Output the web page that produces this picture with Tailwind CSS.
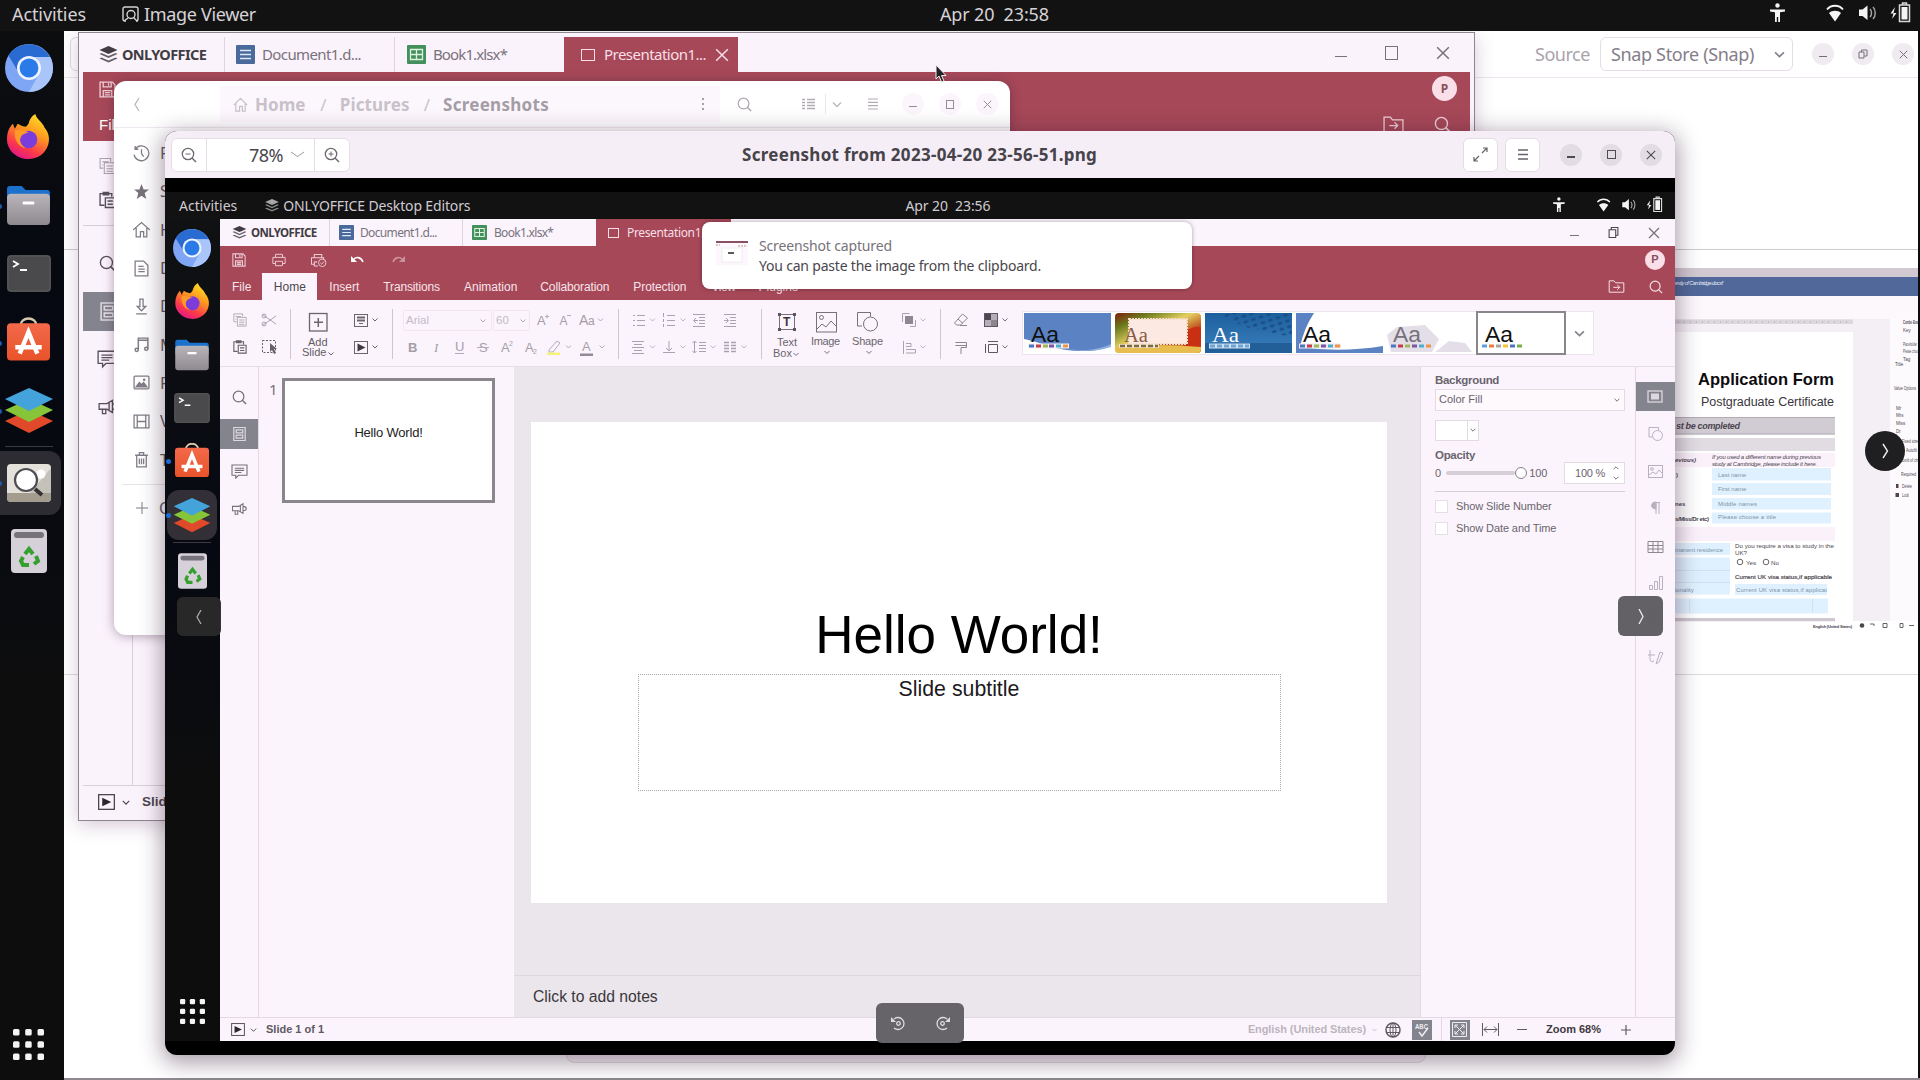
<!DOCTYPE html>
<html lang="en">
<head>
<meta charset="utf-8">
<title>Image Viewer</title>
<script src="https://cdn.jsdelivr.net/npm/@tailwindcss/browser@4"></script>
</head>
<body class="relative h-[1080px] w-[1920px] overflow-hidden bg-[#0c0c0d] font-['Noto_Sans',sans-serif] whitespace-nowrap text-[#4a464c]">
<!-- Icon sprite -->
<svg class="absolute size-0">
  <defs>
    <linearGradient id="ffg" x1=".8" y1="0" x2=".3" y2="1"><stop offset="0" stop-color="#ffe226"/><stop offset=".4" stop-color="#ff9a1f"/><stop offset=".75" stop-color="#fb3a4a"/><stop offset="1" stop-color="#e3158a"/></linearGradient>
    <linearGradient id="flg" x1="0" y1="0" x2="0" y2="1"><stop offset="0" stop-color="#b9b3ba"/><stop offset="1" stop-color="#8f8a90"/></linearGradient>
    <linearGradient id="swg" x1="0" y1="0" x2="0" y2="1"><stop offset="0" stop-color="#f2694a"/><stop offset="1" stop-color="#e8532a"/></linearGradient>
    <linearGradient id="blg" x1="0" y1="0" x2="0" y2="1"><stop offset="0" stop-color="#1d5f9e"/><stop offset="1" stop-color="#3a80bd"/></linearGradient>
    <linearGradient id="autumn" x1="0" y1="0" x2="1" y2="1"><stop offset="0" stop-color="#7d1d0c"/><stop offset=".2" stop-color="#6c7a1d"/><stop offset=".45" stop-color="#e3d060"/><stop offset=".7" stop-color="#b83a14"/><stop offset="1" stop-color="#f0b640"/></linearGradient>
    <pattern id="dots" width="8" height="6" patternUnits="userSpaceOnUse" patternTransform="rotate(-18)"><ellipse cx="4" cy="3" rx="2.6" ry="1.6" fill="#17487f" opacity=".8"/></pattern>
  </defs>
  <symbol id="chromium" viewBox="0 0 48 48"><circle cx="24" cy="24" r="24" fill="#7ea6f4"/><path d="M3.400 11.600A24 24 0 0 1 45 13H24L14 29Z" fill="#2a6bd2"/><path d="M24 13H45.300A24 24 0 0 1 24 48L34 30Z" fill="#a9c5fa"/><circle cx="24" cy="24" r="12" fill="#eef3ff"/><circle cx="24" cy="24" r="9.400" fill="#2a7ae8"/></symbol>
  <symbol id="firefox" viewBox="0 0 44 46"><path d="M29 0c1 5 7 8 9.500 14C43 19 44 26 42 32c-3 9-11 14-20 14C10 46 0 37 0 26c0-7 2-12 6-16l2 5 3-5c2 1 4 3 8 3 2-1 2-2 3-3 1-4 3-8 7-10Z" fill="url(#ffg)"/><circle cx="22" cy="26" r="9" fill="#7a3ddb"/><path d="M8 17c5-2 10 0 14 2-4 1-7 2-8 5-2 4 1 9 6 11-8-1-13-8-12-18Z" fill="#ff9a28"/></symbol>
  <symbol id="files" viewBox="0 0 46 42"><path d="M1 4q0-3 3-3h12l4 4h22q3 0 3 3v12H1Z" fill="#1a72cc"/><rect x="1" y="9" width="44" height="32" rx="4" fill="url(#flg)"/><rect x="17" y="17" width="12" height="3" rx="1" fill="#fff"/></symbol>
  <symbol id="terminal" viewBox="0 0 44 37"><rect width="44" height="37" rx="4" fill="#4a4a4c"/><rect x="1" y="1" width="42" height="35" rx="3" fill="none" stroke="#5a5a5c"/><path d="m6 6 5 3-5 3M13 15h7" fill="none" stroke="#fff" stroke-width="1.800"/></symbol>
  <symbol id="software" viewBox="0 0 46 44"><path d="M15 8a8 7 0 0 1 16 0" fill="none" stroke="#d8c8b0" stroke-width="2.400"/><rect x="1" y="6" width="44" height="38" rx="4" fill="url(#swg)"/><path d="M14 37 23 15l9 22M9.500 30.500h27" fill="none" stroke="#fff" stroke-width="4.500"/></symbol>
  <symbol id="oo" viewBox="0 0 48 46"><path d="m24 22 24 11-24 12L0 33Z" fill="#e1492a"/><path d="m24 11 24 11-24 12L0 22Z" fill="#86c53a"/><path d="m24 0 24 11-24 12L0 11Z" fill="#45a3dc"/></symbol>
  <symbol id="viewer" viewBox="0 0 44 38"><rect width="44" height="38" rx="4" fill="#e4e0da"/><path d="M22 30 44 4v26Z" fill="#c4c2b8"/><path d="M0 29h44v5q0 4-4 4H4q-4 0-4-4Z" fill="#a59c90"/><circle cx="34" cy="10" r="4.500" fill="#fff"/><circle cx="19" cy="16" r="11" fill="#fff" stroke="#4e4e52" stroke-width="2.200"/><path d="m28 25 7 6" stroke="#333" stroke-width="4"/></symbol>
  <symbol id="trash" viewBox="0 0 36 44"><rect width="36" height="44" rx="4" fill="#d6d1d8"/><rect x="3" y="3" width="30" height="6" rx="3" fill="#77737a"/><g fill="none" stroke="#35a02f" stroke-width="4"><path d="m14 25 4-5 4 5M25 27l2 5-4 3M18 36h-6l-2-4 2-4"/></g></symbol>
  <symbol id="grid" viewBox="0 0 31 31"><g fill="#f4f4f4"><rect width="6.500" height="6.500" rx="1.500"/><rect x="12.200" width="6.500" height="6.500" rx="1.500"/><rect x="24.500" width="6.500" height="6.500" rx="1.500"/><rect y="12.200" width="6.500" height="6.500" rx="1.500"/><rect x="12.200" y="12.200" width="6.500" height="6.500" rx="1.500"/><rect x="24.500" y="12.200" width="6.500" height="6.500" rx="1.500"/><rect y="24.500" width="6.500" height="6.500" rx="1.500"/><rect x="12.200" y="24.500" width="6.500" height="6.500" rx="1.500"/><rect x="24.500" y="24.500" width="6.500" height="6.500" rx="1.500"/></g></symbol>
  <symbol id="stack" viewBox="0 0 18 17"><path d="m9 0 9 4-9 4-9-4Z" fill="currentColor"/><path d="m0 8 2-1 7 3 7-3 2 1-9 4ZM0 12.500l2-1 7 3 7-3 2 1-9 4Z" fill="currentColor" opacity=".8"/></symbol>
  <symbol id="doc" viewBox="0 0 19 19"><rect width="19" height="19" rx="1" fill="#4a6a9c"/><path d="M4 5.500h11M4 9.500h11M4 13.500h11" stroke="#dfe8f5" stroke-width="1.400"/></symbol>
  <symbol id="sheet" viewBox="0 0 19 19"><rect width="19" height="19" rx="1" fill="#43905c"/><path d="M3.500 4.500h12v10h-12ZM3.500 9.500h12M9.500 4.500v10" fill="none" stroke="#dff2e2" stroke-width="1.300"/></symbol>
  <symbol id="search" viewBox="0 0 16 16"><circle cx="7" cy="7" r="5.700" fill="none" stroke="currentColor" stroke-width="1.300"/><path d="m11 11 4 4" stroke="currentColor" stroke-width="1.500"/></symbol>
  <symbol id="x" viewBox="0 0 12 12"><path d="m1 1 10 10M11 1 1 11" stroke="currentColor" stroke-width="1.300"/></symbol>
  <symbol id="chev" viewBox="0 0 10 6"><path d="m1 1 4 4 4-4" fill="none" stroke="currentColor" stroke-width="1.500"/></symbol>
  <symbol id="save" viewBox="0 0 16 16"><path d="M1 1h11.500L15 3.500V15H1ZM4 1v4.500h7.500V1M9 2v2.500M4 15V9h8v6M5.500 11h5M5.500 13h5" fill="none" stroke="currentColor" stroke-width="1.200"/></symbol>
  <symbol id="printer" viewBox="0 0 16 16"><path d="M4 5V1.500h8V5M4 12H1V5h14v7h-3M4 9.500h8v5H4Z" fill="none" stroke="currentColor" stroke-width="1.100"/></symbol>
  <symbol id="folder" viewBox="0 0 20 16"><path d="M1 1h6l2 2.500h10V15H1ZM6 9h8M11 6l3 3-3 3" fill="none" stroke="currentColor" stroke-width="1.200"/></symbol>
  <symbol id="copy" viewBox="0 0 16 16"><path d="M11 4V1H1v9h3M5 5h10v10H5ZM3 4h6M3 7h1M7 8h6M7 10.500h6M7 13h6" fill="none" stroke="currentColor"/></symbol>
  <symbol id="paste" viewBox="0 0 16 16"><path d="M12 5V2H1v11h4M4 1h5v2H4ZM6 6h9v9H6ZM8 9h5M8 12h5" fill="none" stroke="currentColor" stroke-width="1.300"/></symbol>
  <symbol id="slides" viewBox="0 0 16 18"><path d="M1 1h14v16H1ZM4 4h8v3.500H4ZM4 10.500h8V14H4Z" fill="none" stroke="currentColor" stroke-width="1.500"/></symbol>
  <symbol id="comment" viewBox="0 0 18 16"><path d="M1 1h16v11H8l-3 3v-3H1ZM4 4.500h10M4 6.800h10M4 9h7" fill="none" stroke="currentColor" stroke-width="1.200"/></symbol>
  <symbol id="horn" viewBox="0 0 18 16"><path d="M1 5h7l5-3v11l-5-3H1ZM4 10v4h3v-4M13 5c5 0 5 5 0 5M10 4v7" fill="none" stroke="currentColor" stroke-width="1.200"/></symbol>
  <symbol id="play" viewBox="0 0 16 15"><rect x=".6" y=".6" width="14.800" height="13.800" fill="none" stroke="currentColor" stroke-width="1.200"/><path d="m4 3.500 8.500 4-8.500 4Z" fill="#2b272d"/></symbol>
  <symbol id="status" viewBox="1754 0 170 36"><g fill="#f4f4f4"><circle cx="1776.500" cy="6.500" r="2.200"/><path d="M1769 10.500h15v2l-5 .7V23h-1.800v-5h-1.400v5h-1.800v-9.800l-5-.7Z"/><path d="M1834 22.500 1828 14c3-3 9-3 12 0Z"/><path d="M1858 10.500h3.500l5-4v14.500l-5-4H1858ZM1894 8l-4.500 6.500h3L1891 20l4.500-6h-3Z"/></g><path d="M1826 10.500c4-5 12-5 16 0" fill="none" stroke="#f4f4f4" stroke-width="1.800"/><path d="M1869 10c2 2 2 6 0 8M1872 8c3 3 3 9 0 12" fill="none" stroke="#a9a9a9" stroke-width="1.400"/><path d="M1898.500 6h10v16.500h-10ZM1901.500 6V4h4v2" fill="none" stroke="#d9d9d9" stroke-width="1.500"/><rect x="1900.500" y="8" width="6" height="12.500" fill="#f4f4f4"/></symbol>
</svg>

<!-- Software store window -->
<section class="absolute left-[64px] top-[31px] flex h-[1047px] w-[1854px] flex-col bg-white">
  <header class="flex h-[47px] shrink-0 items-center border-b border-[#efe4ef]">
    <div class="ml-[6px] h-[34px] w-[60px] rounded-md border border-[#e4dae5]"></div>
    <span class="ml-auto text-[18px] leading-none tracking-[-0.46px] text-[#aaa3ac]">Source</span>
    <div class="ml-[10px] flex h-[34px] w-[193px] items-center rounded-md border border-[#e6dbe7] pl-[10px] text-[#857e8a]"><span class="text-[18px] leading-none tracking-[-0.35px]">Snap Store (Snap)</span><svg class="ml-[20px] h-[7px] w-[11px]"><use href="#chev"/></svg></div>
    <div class="mr-[4px] ml-[19px] flex gap-[18px] text-[#726d76]">
      <i class="flex size-[22px] items-end justify-center rounded-full bg-[#f0eaf1] pb-[8px]"><b class="h-px w-[8px] bg-current"></b></i>
      <i class="flex size-[22px] items-center justify-center rounded-full bg-[#f0eaf1]"><svg class="size-[10px]" viewBox="0 0 10 10"><path d="M1 3h5v6H1ZM3.500 3V1H9v6H6.500" fill="none" stroke="currentColor"/></svg></i>
      <i class="flex size-[22px] items-center justify-center rounded-full bg-[#f0eaf1]"><svg class="size-[9px]"><use href="#x"/></svg></i>
    </div>
  </header>
  <div class="h-[172px] shrink-0 border-b border-[#cfcad0]"></div>
  <div class="flex h-[425px] shrink-0 justify-end border-b border-[#dfdae0] pt-[18px]">
    <svg class="h-[364px] w-[243px] font-['Liberation_Sans',sans-serif]" viewBox="1675 268 243 364" fill="#4b454e">
      <rect x="1675" y="268" width="243" height="10" fill="#d2c9d2"/><rect x="1675" y="277" width="243" height="19" fill="#50699a"/>
      <text x="1674" y="284.500" font-size="5.500" font-style="italic" fill="#e8edf8" textLength="49">ersity of Cambridge.docxf</text>
      <rect x="1675" y="296" width="243" height="23" fill="#fcf8fc"/>
      <rect x="1675" y="319" width="215" height="302" fill="#f4eff5"/><rect x="1675" y="319.500" width="178" height="4.500" fill="#dcd6dd"/><path d="M1678 322h174" stroke="#aaa3ac" stroke-dasharray="1 5"/>
      <rect x="1675" y="332" width="178" height="289" fill="#fff"/><rect x="1890" y="319" width="28" height="302" fill="#fdfafd"/>
      <g fill="#0d0b0e"><text x="1698" y="385" font-size="16.500" font-weight="700" textLength="136">Application Form</text><text x="1701" y="406" font-size="12.500" fill="#3a353c" textLength="133">Postgraduate Certificate</text></g>
      <rect x="1675" y="417" width="160" height="17.500" fill="#d1ccd3"/><path d="M1675 417.500h160M1675 434h160" stroke="#b3acb5"/>
      <text x="1676" y="429" font-size="9" font-weight="700" font-style="italic" textLength="64">st be completed</text>
      <rect x="1675" y="438" width="160" height="13" fill="#e1dce2"/><rect x="1675" y="453" width="160" height="14" fill="#faf1fa"/>
      <g font-size="6" font-weight="700"><text x="1675" y="462" font-style="italic">evious)</text><text x="1676" y="477">)</text><text x="1675" y="506">nes</text><text x="1675" y="521" textLength="34">s/Miss/Dr etc)</text></g>
      <g font-size="6" font-style="italic"><text x="1712" y="459" textLength="109">If you used a different name during previous</text><text x="1712" y="465.500" textLength="105">study at Cambridge, please include it here.</text></g>
      <g fill="#dff1fe"><rect x="1712" y="468" width="119" height="12.500"/><rect x="1712" y="483" width="119" height="12"/><rect x="1712" y="498" width="119" height="11.500"/><rect x="1712" y="512.500" width="119" height="11"/><rect x="1675" y="543" width="55" height="12"/><rect x="1675" y="557.500" width="55" height="37"/><rect x="1735" y="584" width="92" height="11"/><rect x="1675" y="598.500" width="153" height="15"/></g>
      <path d="M1675 570.500h55M1675 582.500h55M1689.500 599v14M1812.500 599v14" stroke="#cfe2f2"/>
      <g font-size="6" fill="#7a93a8"><text x="1718" y="476.500">Last name</text><text x="1718" y="491">First name</text><text x="1718" y="506" textLength="39">Middle names</text><text x="1718" y="519" textLength="58">Please choose a title</text><text x="1675" y="551.500" textLength="48">manent residence</text><text x="1675" y="591.500">ionality</text><text x="1736" y="591.500" textLength="91">Current UK visa status,if applicat</text></g>
      <rect x="1675" y="527" width="160" height="14" fill="#fbf1fb"/>
      <g font-size="6.200"><text x="1735" y="548" textLength="99">Do you require a visa to study in the</text><text x="1735" y="555">UK?</text><circle cx="1740" cy="562" r="2.800" fill="none" stroke="#666"/><text x="1746" y="564.500">Yes</text><circle cx="1766" cy="562" r="2.800" fill="none" stroke="#666"/><text x="1771" y="564.500">No</text><text x="1735" y="578.500" stroke="#4b454e" stroke-width=".2" textLength="97">Current UK visa status,if applicable</text></g>
      <rect x="1675" y="618" width="160" height="3.500" fill="#cfc7d0"/>
      <rect x="1675" y="621.500" width="243" height="10" fill="#fff"/><text x="1813" y="627.500" font-size="4" font-weight="700" textLength="39">English (United States)</text>
      <circle cx="1862" cy="625.500" r="2.300"/><path d="M1870 624h4v2M1883 623.500h4v4h-4ZM1900 623.500h3v4h-3ZM1909 625.500h5" fill="none" stroke="#666"/>
      <g font-size="4.500"><text x="1903" y="324" font-weight="700" textLength="15" lengthAdjust="spacingAndGlyphs">Combo Box</text><text x="1903" y="331.500">Key</text><text x="1903" y="346" textLength="14" lengthAdjust="spacingAndGlyphs">Placeholder</text><text x="1903" y="352.500" textLength="15" lengthAdjust="spacingAndGlyphs">Please choo</text><text x="1903" y="360.500">Tag</text><text x="1895" y="366">Title</text><text x="1894" y="390" textLength="22" lengthAdjust="spacingAndGlyphs">Value Options</text><text x="1896" y="409.500">Mr</text><text x="1896" y="417">Mrs</text><text x="1896" y="425">Miss</text><text x="1896" y="432.500">Dr</text><text x="1902" y="443" textLength="16" lengthAdjust="spacingAndGlyphs">Fixed size</text><text x="1906" y="452" textLength="11" lengthAdjust="spacingAndGlyphs">Autofit</text><text x="1900" y="462" textLength="18" lengthAdjust="spacingAndGlyphs">Comb of ch</text><text x="1901" y="476" textLength="15" lengthAdjust="spacingAndGlyphs">Required</text><text x="1902" y="487.500" textLength="10" lengthAdjust="spacingAndGlyphs">Delete</text><text x="1902" y="497" textLength="7" lengthAdjust="spacingAndGlyphs">Lock</text></g><path d="M1896 484h2.500v4h-2.500ZM1895.500 493h3.500v4h-3.500Z"/>
    </svg>
  </div>
</section>
<div class="absolute left-[64px] top-[1078px] h-[2px] w-[1856px] bg-[#8d898e]"></div>
<button class="absolute left-[1865px] top-[431px] flex size-[40px] items-center justify-center rounded-full bg-[#1f1e20]"><svg class="h-[16px] w-[7px]" viewBox="0 0 7 16"><path d="m1 1 4.500 7L1 15" fill="none" stroke="#eee" stroke-width="1.400"/></svg></button>
<div class="absolute left-[566px] top-[1040px] h-[23px] w-[860px] rounded-lg border border-[#e0dae1] bg-[#f6f1f6]"></div>

<!-- Office window behind -->
<section class="absolute left-[78px] top-[32px] flex h-[789px] w-[1397px] flex-col border border-[#8c868e] bg-[#fbf3fc] shadow-[0_4px_18px_rgba(90,40,90,0.25)]">
  <div class="flex h-[39px] items-end text-[15px] leading-none text-[#78727b]">
    <div class="flex h-[35px] w-[146px] items-center border-r border-[#ddd4de] pl-[20px] text-[#403c42]"><svg class="h-[17px] w-[19px]"><use href="#stack"/></svg><b class="ml-[4px] text-[14.500px] tracking-[-0.6px]">ONLYOFFICE</b></div>
    <div class="flex h-[35px] w-[170px] items-center border-r border-[#ddd4de] pl-[11px]"><svg class="size-[19px]"><use href="#doc"/></svg><span class="ml-[7px] tracking-[-0.61px]">Document1.d...</span></div>
    <div class="flex h-[35px] w-[169px] items-center pl-[12px]"><svg class="size-[19px]"><use href="#sheet"/></svg><span class="ml-[7px] tracking-[-0.88px]">Book1.xlsx*</span></div>
    <div class="flex h-[35px] w-[174px] items-center bg-[#a64858] pl-[17px] text-[#f6dfe6]"><i class="h-[12px] w-[14px] border border-current"></i><span class="ml-[9px] tracking-[-0.53px]">Presentation1...</span><svg class="ml-[9px] size-[14px]"><use href="#x"/></svg></div>
    <div class="mr-[24px] mb-[12px] ml-auto flex items-end gap-[38px] text-[#77717a]"><b class="mb-[3px] h-px w-[12px] bg-current"></b><i class="h-[14px] w-[13px] border border-current"></i><svg class="size-[14px]"><use href="#x"/></svg></div>
  </div>
  <div class="mx-[4px] flex h-[69px] shrink-0 justify-between bg-[#a64858] text-[#efd0d8]">
    <div class="flex flex-col pt-[9px] pl-[16px]"><svg class="size-[17px]"><use href="#save"/></svg><span class="mt-[19px] text-[15px] leading-none text-white font-['Liberation_Sans',sans-serif]">File</span></div>
    <div class="flex flex-col items-end pt-[4px] pr-[13px]"><b class="flex h-[25px] w-[25px] items-center justify-center rounded-full bg-[#fadfe8] text-[12px] text-[#84525f]">P</b><div class="mt-[15px] mr-[6px] flex gap-[30px]"><svg class="h-[17px] w-[21px]"><use href="#folder"/></svg><svg class="size-[17px]"><use href="#search"/></svg></div></div>
  </div>
  <div class="mx-[4px] flex w-[32px] flex-1 flex-col text-[#57525a]">
    <svg class="mt-[16px] ml-[16px] h-[18px] w-[17px] text-[#aaa3ac]"><use href="#copy"/></svg>
    <svg class="mt-[16px] ml-[16px] h-[18px] w-[17px]"><use href="#paste"/></svg>
    <div class="mt-[16px] h-px w-[60px] bg-[#d6ced7]"></div>
    <svg class="mt-[29px] ml-[16px] size-[17px]"><use href="#search"/></svg>
    <div class="mt-[20px] h-[39px] w-[60px] bg-[#84848f] pt-[10px] pl-[17px] text-[#ddd8e0]"><svg class="h-[19px] w-[17px]"><use href="#slides"/></svg></div>
    <svg class="mt-[18px] ml-[14px] h-[20px] w-[20px]"><use href="#comment"/></svg>
    <svg class="mt-[29px] ml-[15px] h-[18px] w-[20px]"><use href="#horn"/></svg>
    <div class="mt-auto h-[160px] w-[50px] border-r border-[#d8d0d9]"></div>
  </div>
  <footer class="mx-[4px] flex h-[35px] items-center border-t border-[#d8d0d9] pb-[2px] pl-[15px]"><svg class="h-[16px] w-[17px]"><use href="#play"/></svg><svg class="ml-[7px] h-[5px] w-[8px]"><use href="#chev"/></svg><b class="ml-[12px] text-[13.500px] font-['Liberation_Sans',sans-serif]">Slide 1 of 1</b></footer>
</section>

<!-- Files window -->
<section class="absolute left-[114px] top-[81px] flex h-[554px] w-[896px] flex-col overflow-hidden rounded-xl bg-white shadow-[0_1px_12px_rgba(60,30,60,0.4)]">
  <header class="flex h-[47px] shrink-0 items-center border-b border-[#efe8f0] text-[17px] leading-none font-bold text-[#c9c1ca]">
    <svg class="ml-[20px] h-[15px] w-[6px]" viewBox="0 0 6 15"><path d="M5 1 1 7.500 5 14" fill="none" stroke="#b9aebb" stroke-width="1.200"/></svg>
    <div class="ml-[80px] flex h-[36px] w-[500px] items-center bg-[#fcf7fc] pl-[13px]">
      <svg class="h-[15px] w-[15px]" viewBox="0 0 16 16"><path d="M1 8.500 8 1.500l7 7M3 7v8h4v-5h3v5h3V7" fill="none" stroke="currentColor" stroke-width="1.300"/></svg>
      <span class="ml-[7px]">Home</span><span class="ml-[15px] font-normal">/</span><span class="ml-[13px] tracking-[0.15px]">Pictures</span><span class="ml-[14px] font-normal">/</span><span class="ml-[13px] tracking-[0.28px] text-[#a49da6]">Screenshots</span>
      <svg class="mr-[15px] ml-auto h-[12px] w-[3px]" viewBox="0 0 3 12" fill="#a69fa8"><path d="M0 0h2v2H0ZM0 5h2v2H0ZM0 10h2v2H0Z"/></svg>
    </div>
    <svg class="ml-[17px] size-[15px] text-[#aea6b0]"><use href="#search"/></svg>
    <svg class="ml-[50px] h-[12px] w-[13px]" viewBox="0 0 13 12"><path d="M0 1.500h3M0 4.500h3M0 7.500h3M0 10.500h3M5 1.500h8M5 4.500h8M5 7.500h8M5 10.500h8" stroke="#b2aab4" stroke-width="1.300"/></svg>
    <i class="ml-[10px] h-[20px] w-px bg-[#ebe4ec]"></i><svg class="ml-[6px] h-[7px] w-[10px] text-[#c0b9c2]"><use href="#chev"/></svg>
    <svg class="ml-[26px] h-[12px] w-[10px]" viewBox="0 0 10 12"><path d="M0 1h10M0 4.300h10M0 7.600h10M0 11h10" stroke="#b2aab4" stroke-width="1.200"/></svg>
    <div class="ml-[24px] flex gap-[15px] text-[#948d97]">
      <i class="flex size-[22px] items-end justify-center rounded-full bg-[#fcf5fc] pb-[8px]"><b class="h-px w-[8px] bg-current"></b></i>
      <i class="flex size-[22px] items-center justify-center rounded-full bg-[#fcf5fc]"><b class="h-[9px] w-[8px] border border-current"></b></i>
      <i class="flex size-[22px] items-center justify-center rounded-full bg-[#fcf5fc]"><svg class="size-[9px]"><use href="#x"/></svg></i>
    </div>
  </header>
  <nav class="flex w-[180px] flex-col pt-[6px] text-[16px] text-[#625d66]">
    <div class="flex h-[38.300px] items-center pl-[19px]"><svg class="size-[17px]" viewBox="0 0 16 16" fill="none" stroke="#827c86" stroke-width="1.200"><path d="M2 4a7 7 0 1 1-1 5M2 1v3h3M8 4v4l2 3"/></svg><span class="ml-[10px]">Recent</span></div>
    <div class="flex h-[38.300px] items-center pl-[19px]"><svg class="size-[17px]" viewBox="0 0 16 16" fill="#77717a"><path d="m8 1 2 5h5l-4 3.500 1.500 5.500L8 12l-4.500 3L5 9.500 1 6h5Z"/></svg><span class="ml-[10px]">Starred</span></div>
    <div class="flex h-[38.300px] items-center pl-[19px]"><svg class="size-[17px]" viewBox="0 0 16 16" fill="none" stroke="#827c86" stroke-width="1.200"><path d="m0 8.500 8-7 8 7M3 6.500V15h4v-5h3v5h3V6.500"/></svg><span class="ml-[10px]">Home</span></div>
    <div class="flex h-[38.300px] items-center pl-[19px]"><svg class="size-[17px]" viewBox="0 0 16 16" fill="none" stroke="#827c86" stroke-width="1.200"><path d="M2 1h8l4 4v10H2ZM5 6h5M5 8.500h6M5 11h6"/></svg><span class="ml-[10px]">Documents</span></div>
    <div class="flex h-[38.300px] items-center pl-[19px]"><svg class="size-[17px]" viewBox="0 0 16 16" fill="none" stroke="#827c86" stroke-width="1.200"><path d="M6.500 1h3v7H12l-4 4-4-4h2.500ZM3 15h10"/></svg><span class="ml-[10px]">Downloads</span></div>
    <div class="flex h-[38.300px] items-center pl-[19px]"><svg class="size-[17px]" viewBox="0 0 16 16" fill="none" stroke="#827c86" stroke-width="1.400"><path d="M5 13V2h9v10M5 4h9"/><circle cx="3.500" cy="13" r="1.500"/><circle cx="12.500" cy="12" r="1.500"/></svg><span class="ml-[10px]">Music</span></div>
    <div class="flex h-[38.300px] items-center pl-[19px]"><svg class="size-[17px]" viewBox="0 0 16 16" fill="none" stroke="#827c86" stroke-width="1.200"><rect x="1" y="2" width="14" height="12" rx="1"/><path d="m3 12 3-4 2 2 2-2 3 4Z" fill="#827c86"/><circle cx="10.500" cy="5.500" r=".6"/></svg><span class="ml-[10px]">Pictures</span></div>
    <div class="flex h-[38.300px] items-center pl-[19px]"><svg class="size-[17px]" viewBox="0 0 16 16" fill="none" stroke="#827c86" stroke-width="1.200"><path d="M1 2h14v12H1ZM4 2v12M12 2v12M4 8h8"/></svg><span class="ml-[10px]">Videos</span></div>
    <div class="flex h-[38.300px] items-center pl-[19px]"><svg class="size-[17px]" viewBox="0 0 16 16" fill="none" stroke="#827c86" stroke-width="1.200"><path d="M2 4h12M6 4V1.500h4V4M3.500 4v11h9V4M6 7v5.500M8 7v5.500M10 7v5.500"/></svg><span class="ml-[10px]">Trash</span></div>
    <div class="mt-[5px] ml-[8px] h-px bg-[#eae2eb]"></div>
    <div class="mt-[4px] flex h-[38px] items-center pl-[22px]"><svg class="size-[12px]" viewBox="0 0 12 12"><path d="M6 0v12M0 6h12" stroke="#827c86"/></svg><span class="ml-[11px]">Other</span></div>
  </nav>
</section>

<!-- Image viewer window -->
<section class="absolute left-[165px] top-[131px] flex h-[924px] w-[1510px] flex-col overflow-hidden rounded-xl bg-black shadow-[0_5px_22px_3px_rgba(50,25,50,0.42)]">
  <header class="flex h-[47px] shrink-0 items-center bg-[#f5eef6]">
    <div class="ml-[6px] flex h-[34px] w-[179px] items-center rounded-md border border-[#e5dce6] bg-white text-[#6d6770]">
      <div class="flex h-full w-[35px] items-center justify-center border-r border-[#e5dce6]"><svg class="size-[16px]"><use href="#search"/><path d="M4.500 7h5" stroke="currentColor"/></svg></div>
      <span class="ml-[42px] text-[18px] leading-none tracking-[-0.52px] text-[#4a464d]">78%</span><svg class="ml-[7px] h-[7px] w-[15px]" viewBox="0 0 15 7"><path d="m1 1 6.500 4.500L14 1" fill="none" stroke="#999"/></svg>
      <div class="ml-auto flex h-full w-[35px] items-center justify-center border-l border-[#e5dce6]"><svg class="size-[16px]"><use href="#search"/><path d="M4.500 7h5M7 4.500v5" stroke="currentColor"/></svg></div>
    </div>
    <h1 class="ml-[392px] text-[17px] leading-none font-bold tracking-[0.29px] text-[#47434a]">Screenshot from 2023-04-20 23-56-51.png</h1>
    <div class="ml-auto flex h-[34px] w-[35px] items-center justify-center rounded-md border border-[#e5dce6] bg-white"><svg class="size-[15px]" viewBox="0 0 15 15" fill="none" stroke="#67616a" stroke-width="1.200"><path d="M9 6l5-5M10 1h4v4M6 9l-5 5M1 10v4h4"/></svg></div>
    <div class="ml-[7px] flex h-[34px] w-[35px] items-center justify-center rounded-md border border-[#e5dce6] bg-white"><svg class="h-[11px] w-[10px]" viewBox="0 0 10 11"><path d="M0 1h10M0 5.500h10M0 10h10" stroke="#67616a" stroke-width="1.300"/></svg></div>
    <div class="mr-[13px] ml-[20px] flex gap-[18px] text-[#4f4a52]">
      <i class="flex size-[22px] items-end justify-center rounded-full bg-[#e2dce3] pb-[8px]"><b class="h-[1.500px] w-[8px] bg-current"></b></i>
      <i class="flex size-[22px] items-center justify-center rounded-full bg-[#e2dce3]"><b class="size-[9px] border border-current"></b></i>
      <i class="flex size-[22px] items-center justify-center rounded-full bg-[#e2dce3]"><svg class="size-[10px]"><use href="#x"/></svg></i>
    </div>
  </header>

  <div class="mt-[14px] flex h-[27px] shrink-0 items-center bg-[#131213] text-[14px] leading-none text-[#cfcbd0]">
    <span class="ml-[14px]">Activities</span>
    <svg class="ml-[28px] h-[13px] w-[14px] opacity-80"><use href="#stack"/></svg><span class="ml-[4px] tracking-[-0.14px]">ONLYOFFICE Desktop Editors</span>
    <span class="ml-[435px] tracking-[-0.08px] whitespace-pre">Apr 20  23:56</span>
    <svg class="mt-[4px] mr-px ml-auto h-[28px] w-[133px]"><use href="#status"/></svg>
  </div>

  <div class="flex h-[822px] shrink-0">
    <aside class="relative flex w-[55px] shrink-0 flex-col items-center bg-[#0b0b0c] bg-linear-to-b from-[#101112] via-[#070912] via-40% to-[#0d0d0d] to-70% pr-[1px]">
      <svg class="mt-[10px] size-[38px]"><use href="#chromium"/></svg>
      <svg class="mt-[16px] h-[36px] w-[35px]"><use href="#firefox"/></svg>
      <svg class="mt-[20px] h-[32px] w-[36px]"><use href="#files"/></svg>
      <svg class="mt-[22px] h-[30px] w-[36px]"><use href="#terminal"/></svg>
      <svg class="mt-[20px] h-[34px] w-[36px]"><use href="#software"/></svg>
      <div class="mt-[13px] flex size-[50px] items-center justify-center rounded-xl bg-[#323036]"><svg class="h-[35px] w-[38px]"><use href="#oo"/></svg></div>
      <div class="mt-[2px] h-px w-[38px] bg-[#3b3a40]"></div>
      <svg class="mt-[10px] h-[36px] w-[29px]"><use href="#trash"/></svg>
      <svg class="mt-auto mb-[17px] size-[25px]"><use href="#grid"/></svg>
      <i class="absolute left-[1px] top-[240px] size-[5px] rounded-full bg-[#1c6bd0]"></i>
      <i class="absolute left-[1px] top-[294px] size-[5px] rounded-full bg-[#1c6bd0]"></i>
    </aside>

    <div class="flex w-[1455px] flex-col bg-[#fbf4fc] font-['Liberation_Sans',sans-serif]">
      <div class="flex h-[27px] shrink-0 items-center font-['Noto_Sans',sans-serif] text-[12px] leading-none text-[#78727b]">
        <div class="flex h-full w-[110px] items-center border-r border-[#ddd4de] pl-[12px] text-[#403c42]"><svg class="h-[13px] w-[15px]"><use href="#stack"/></svg><b class="ml-[4px] text-[11.500px] tracking-[-0.6px]">ONLYOFFICE</b></div>
        <div class="flex h-full w-[133px] items-center border-r border-[#ddd4de] pl-[9px]"><svg class="size-[15px]"><use href="#doc"/></svg><span class="ml-[6px] tracking-[-0.65px]">Document1.d...</span></div>
        <div class="flex h-full w-[133px] items-center pl-[9px]"><svg class="size-[15px]"><use href="#sheet"/></svg><span class="ml-[7px] tracking-[-0.7px]">Book1.xlsx*</span></div>
        <div class="flex h-full w-[135px] items-center bg-[#a64858] pl-[12px] text-[#f6dfe6]"><i class="h-[10px] w-[11px] border border-current"></i><span class="ml-[8px] tracking-[-0.35px]">Presentation1...</span></div>
        <div class="mr-[15px] ml-auto flex items-center gap-[29px] text-[#77717a]"><b class="mt-[6px] h-px w-[9px] bg-current"></b><svg class="size-[11px] text-[#4b464d]" viewBox="0 0 10 10"><path d="M1 2.500h6V9.500H1ZM3 2.500V.5h6v7H7" fill="none" stroke="currentColor"/></svg><svg class="size-[12px]"><use href="#x"/></svg></div>
      </div>
      <div class="flex h-[27px] shrink-0 items-center bg-[#a64858] text-[#ecccd5]">
        <svg class="ml-[12px] size-[14px]"><use href="#save"/></svg><svg class="ml-[25px] h-[14px] w-[16px]"><use href="#printer"/></svg>
        <svg class="ml-[23px] h-[14px] w-[17px]" viewBox="0 0 17 15"><path d="M4 5V1.500h8V5M4 12H1V5h13v2M4 9.500h3M4 9.500V14h4" fill="none" stroke="currentColor" stroke-width="1.100"/><circle cx="12.500" cy="10.500" r="4" fill="none" stroke="currentColor"/><path d="m10.500 10.500 1.500 1.500 2.500-3" fill="none" stroke="currentColor"/></svg>
        <svg class="ml-[24px] h-[9px] w-[13px]" viewBox="0 0 13 9"><path d="M2 5c3-4 8-3 10 2" fill="none" stroke="#fff" stroke-width="1.600"/><path d="M0 1v6h6Z" fill="#fff"/></svg>
        <svg class="ml-[28px] h-[9px] w-[13px] opacity-40" viewBox="0 0 13 9"><path d="M11 5C8 1 3 2 1 7" fill="none" stroke="#fff" stroke-width="1.600"/><path d="M13 1v6H7Z" fill="#fff"/></svg>
        <b class="mr-[10px] ml-auto flex size-[20px] items-center justify-center rounded-full bg-[#fadfe8] text-[11px] text-[#84525f]">P</b>
      </div>
      <div class="flex h-[27px] shrink-0 items-center bg-[#a64858] text-[12px] leading-none text-[#f7e4ea]">
        <span class="ml-[12px]">File</span><div class="ml-[11px] flex h-full w-[55px] items-center justify-center bg-[#fbf4fc] text-[#4c474f]">Home</div>
        <span class="ml-[12px]">Insert</span><span class="ml-[24px] tracking-[-0.15px]">Transitions</span><span class="ml-[24px]">Animation</span><span class="ml-[23px] tracking-[-0.13px]">Collaboration</span><span class="ml-[24px] tracking-[-0.1px]">Protection</span><span class="ml-[25px] tracking-[-0.4px]">View</span><span class="ml-[23px]">Plugins</span>
        <svg class="ml-auto h-[13px] w-[17px]"><use href="#folder"/></svg><svg class="mr-[12px] ml-[24px] size-[14px]"><use href="#search"/></svg>
      </div>

      <!-- Home toolbar -->
      <div class="flex h-[67px] shrink-0 items-center border-b border-[#e6dee7] text-[#aaa3ad]">
        <svg class="h-[66px] w-[70px]" viewBox="220 300 70 66" fill="none" stroke="currentColor"><use href="#copy" x="233" y="313" width="14" height="14"/><path d="M263 315l13 9M263 325l13-9"/><circle cx="264" cy="316" r="2"/><circle cx="264" cy="324" r="2"/><g color="#67616a"><use href="#paste" x="233" y="340" width="14" height="14"/></g><rect x="262.500" y="340.500" width="13" height="12" stroke="#67616a" stroke-dasharray="2 1.500"/><path d="m270 343 7 6h-3l2 4-2 1-2-4-2 2Z" fill="#67616a" stroke="none"/></svg>
        <svg class="h-[66px] w-[102px]" viewBox="290 300 102 66" fill="none" stroke="#6b656e"><path d="M290.500 309v50" stroke="#cfc7d0"/><rect x="309.500" y="313.500" width="17.500" height="17.500" stroke-width="1.300"/><path d="M318.300 318v9M314 322.300h9" stroke-width="1.500"/><g fill="#625c65" stroke="none" font-size="11"><text x="308" y="346">Add</text><text x="302" y="356">Slide</text></g><path d="m328.500 352.500 2.500 2.500 2.500-2.500"/><rect x="354.500" y="314.500" width="13" height="12"/><path d="M357 317.500h8M357 320.500h8" stroke-width="1.800"/><path d="M359 323.500h4"/><path d="m372.500 318.500 2.500 2.500 2.500-2.500M372.500 345.500l2.500 2.500 2.500-2.500"/><rect x="354.500" y="341.500" width="13" height="12"/><path d="m357.500 343.500 8 4-8 4Z" fill="#3f3a42" stroke="none"/></svg>
        <svg class="h-[66px] w-[226px]" viewBox="392 300 226 66" fill="none" stroke="#b3acb6"><path d="M392.500 309v50" stroke="#cfc7d0"/><rect x="403.500" y="310.500" width="88" height="20" rx="1" stroke="#f0e7f1"/><rect x="493.500" y="310.500" width="36" height="20" rx="1" stroke="#f0e7f1"/><path d="m480.500 319.500 2.500 2.500 2.500-2.500M520.500 319.500l2.500 2.500 2.500-2.500M598 318.500l2.500 2.500 2.500-2.500M566 345.500l2.500 2.500 2.500-2.500M599.500 345.500l2.500 2.500 2.500-2.500"/><g fill="#a59ea8" stroke="none" font-size="13"><text x="406" y="324" font-size="11.500" fill="#c3bbc5">Arial</text><text x="496" y="324" font-size="11.500" fill="#c3bbc5">60</text><text x="537" y="325">A</text><text x="559.500" y="324.500" font-size="12">A</text><text x="579" y="325" font-size="14">A</text><text x="588" y="325" font-size="12">a</text><text x="408" y="352" font-weight="700">B</text><text x="434" y="352" font-style="italic" font-family="Liberation Serif">I</text><text x="455" y="351">U</text><text x="479" y="352">S</text><text x="501" y="352">A</text><text x="509" y="346" font-size="7">2</text><text x="525" y="352">A</text><text x="533" y="354" font-size="7">2</text><text x="582" y="351">A</text></g><path d="M545 316.500h4M547 314.500v4M567 315.500h4M455 353.500h9M477 347.500h12"/><path d="m549 350 8-9 3 2-7 9h-4Z"/><rect x="547" y="352.500" width="13" height="2.500" fill="#f3f27a" stroke="none"/><rect x="580" y="353.500" width="13" height="2.500" fill="#928b95" stroke="none"/></svg>
        <svg class="h-[66px] w-[143px]" viewBox="618 300 143 66" fill="none" stroke="#aaa3ad"><path d="M618.500 309v50" stroke="#cfc7d0"/><path d="M633 315.500h2M633 320.500h2M633 325.500h2M637 315.500h8M637 320.500h8M637 325.500h8M663.500 313v4M663.500 319v3M663.500 324v3M667 315.500h8M667 320.500h8M667 325.500h8M693 314.500h12M699 317.500h6M699 320.500h6M699 323.500h6M693 326.500h12M694 320.500h4M696 318l-2.500 2.500L696 323M724 314.500h12M730 317.500h6M730 320.500h6M730 323.500h6M724 326.500h12M724 320.500h4M726 318l2.500 2.500L726 323M632 341.500h12M634 344.500h8M632 347.500h12M634 350.500h8M632 353.500h12M669 341v10M666 348l3 3 3-3M663 352.500h12M694.500 341v12M692.500 343l2-2 2 2M692.500 351l2 2 2-2M699 342.500h7M699 345.500h7M699 348.500h7M699 351.500h7"/><path d="M724 342.500h5M724 345.500h5M724 348.500h5M724 351.500h5M731 342.500h5M731 345.500h5M731 348.500h5M731 351.500h5" stroke-width="1.500"/><path d="m650 318.500 2.500 2.500 2.500-2.500M680.500 318.500l2.500 2.500 2.500-2.500M650 345.500l2.500 2.500 2.500-2.500M680.500 345.500l2.500 2.500 2.500-2.500M710.500 345.500l2.500 2.500 2.500-2.500M741.500 345.500l2.500 2.500 2.500-2.500" stroke="#beb7c1"/></svg>
        <svg class="h-[66px] w-[179px]" viewBox="761 300 179 66" fill="none" stroke="#77717a"><path d="M761.500 309v50" stroke="#cfc7d0"/><rect x="779.500" y="314.500" width="15" height="15"/><path d="M778 313h3v3h-3ZM793 313h3v3h-3ZM778 328h3v3h-3ZM793 328h3v3h-3Z" fill="#5b555e" stroke="none"/><g fill="#6b656e" stroke="none" font-size="11"><text x="783" y="326" font-size="12" font-weight="700" fill="#3c373e">T</text><text x="777" y="346">Text</text><text x="773" y="356.500">Box</text><text x="811" y="345" textLength="29">Image</text><text x="852" y="345" textLength="31">Shape</text></g><rect x="816.500" y="312.500" width="20" height="19.500"/><circle cx="821.500" cy="317.500" r="2"/><path d="m817 329 5-5 4 3 5-6 5 5"/><path d="M862 326h-4.500v-13.500h13v4"/><circle cx="870.500" cy="324" r="7"/><path d="m793.500 353 2.500 2.500 2.500-2.500M824.500 351l2.500 2.500 2.500-2.500M866.500 351l2.500 2.500 2.500-2.500"/><rect x="905" y="316" width="8" height="8" fill="#8f8892" stroke="none"/><path d="M902.500 322v-8.500h7M910 326.500h5.500V320M903.500 341v13M906 343.500h5v3h-5M906 349.500h9.500v3.500H906" stroke="#aaa3ad"/><path d="m920.500 318.500 2.500 2.500 2.500-2.500M920.500 345.500l2.500 2.500 2.500-2.500" stroke="#beb7c1"/></svg>
        <svg class="h-[66px] w-[82px]" viewBox="940 300 82 66" fill="none" stroke="#8b858e"><path d="M940.500 309v50" stroke="#cfc7d0"/><path d="m954.500 323 8-9 5 4-7 7h-4ZM960 325.500h7M958 319l5 4.500M955.500 342.500h11v3h-11M966.500 344v3.500h-5.500v6.500"/><rect x="985" y="314" width="6" height="6" fill="#4d484f" stroke="none"/><path d="M985 320h6v6h-6ZM991 314h6v6h-6Z" fill="#b5aeb8" stroke="none"/><rect x="991" y="320" width="6" height="6" fill="#8b858e" stroke="none"/><rect x="984.500" y="313.500" width="13" height="13" stroke="#5d5860"/><path d="M988.500 344.500h9v8h-9ZM985.500 344v9M988 341.500h10" stroke="#5d5860"/><path d="m1002.500 318.500 2.500 2.500 2.500-2.500M1002.500 345.500l2.500 2.500 2.500-2.500" stroke="#77717a"/></svg>
        <div class="flex h-[44px] w-[572px] items-center gap-[4px] border border-[#ede5ee] bg-white pl-px">
          <svg class="h-[40px] w-[87px]" viewBox="0 0 87 40"><rect width="87" height="40" fill="#5b82c2"/><path d="M0 26c20 4 30 12 60 12 12 0 20-2 27-6v8H0Z" fill="#fff"/><path d="M30 31c15 8 40 8 57 0v3c-14 5-40 6-57-3Z" fill="#8fb0de"/><text x="7" y="29" font-size="22" fill="#111" textLength="28" lengthAdjust="spacingAndGlyphs">Aa</text><path d="M4 33h41" stroke="#f4eef6" stroke-width="5"/><path d="M5 33h5" stroke="#4a78c0" stroke-width="3"/><path d="M12 33h5" stroke="#c23f4a" stroke-width="3"/><path d="M19 33h5" stroke="#9cba4f" stroke-width="3"/><path d="M25 33h5" stroke="#7c55a5" stroke-width="3"/><path d="M32 33h5" stroke="#4bb0cc" stroke-width="3"/><path d="M39 33h5" stroke="#f09548" stroke-width="3"/></svg>
          <svg class="h-[40px] w-[86px] rounded-sm" viewBox="0 0 86 40"><rect width="86" height="40" fill="url(#autumn)"/><circle cx="82" cy="28" r="14" fill="#c92f12"/><path d="M0 34q40-4 86 0v6H0Z" fill="#e6bd4e"/><rect x="14" y="6" width="58" height="25" fill="#fbe9e2" stroke="#f6dccb" stroke-width="2" stroke-dasharray="2 1"/><text x="9" y="29" font-size="20" font-family="Liberation Serif" fill="#8a5a45" textLength="24" lengthAdjust="spacingAndGlyphs">Aa</text><path d="M4 33h40" stroke="#f2e3d0" stroke-width="4"/><path d="M5 33h38" stroke="#7a6a42" stroke-width="2.600" stroke-dasharray="5 2"/></svg>
          <svg class="h-[40px] w-[87px]" viewBox="0 0 87 40"><rect width="87" height="40" fill="url(#blg)"/><path d="M12 0h75v24L40 14Z" fill="url(#dots)"/><rect y="30" width="87" height="10" fill="#225f99"/><text x="7" y="29" font-size="22" font-family="Liberation Serif" fill="#fff" textLength="27" lengthAdjust="spacingAndGlyphs">Aa</text><path d="M4 33h41" stroke="#cfe0f0" stroke-width="5"/><path d="M5 33h39" stroke="#6ea4d6" stroke-width="3" stroke-dasharray="5 2"/></svg>
          <svg class="h-[40px] w-[87px]" viewBox="0 0 87 40"><rect width="87" height="40" fill="#fff"/><path d="M0 0h18Q8 15 4 34q40 6 83-1v7H0Z" fill="#5b82c2"/><text x="7" y="29" font-size="22" fill="#111" textLength="28" lengthAdjust="spacingAndGlyphs">Aa</text><path d="M3 33h42" stroke="#eee8f4" stroke-width="5"/><path d="M4 33h5" stroke="#4a78c0" stroke-width="3"/><path d="M11 33h5" stroke="#c23f4a" stroke-width="3"/><path d="M18 33h5" stroke="#9cba4f" stroke-width="3"/><path d="M25 33h5" stroke="#7c55a5" stroke-width="3"/><path d="M32 33h5" stroke="#4bb0cc" stroke-width="3"/><path d="M39 33h5" stroke="#f09548" stroke-width="3"/></svg>
          <svg class="h-[40px] w-[85px]" viewBox="0 0 85 40"><rect width="85" height="40" fill="#fff"/><path d="M0 22 10 14l28-2 14 14-7 13H4ZM52 36l10-8 16 2 7 9H48Z" fill="#e4dee9"/><text x="6" y="29" font-size="22" fill="#77717a" textLength="28" lengthAdjust="spacingAndGlyphs">Aa</text><path d="M4 33h5" stroke="#4a78c0" stroke-width="3"/><path d="M11 33h5" stroke="#c23f4a" stroke-width="3"/><path d="M18 33h5" stroke="#9cba4f" stroke-width="3"/><path d="M25 33h5" stroke="#7c55a5" stroke-width="3"/><path d="M32 33h5" stroke="#4bb0cc" stroke-width="3"/><path d="M39 33h5" stroke="#f09548" stroke-width="3"/></svg>
          <svg class="h-[44px] w-[90px] shrink-0 border-2 border-[#8b858e]" viewBox="0 0 86 40"><text x="7" y="29" font-size="22" fill="#111" textLength="28" lengthAdjust="spacingAndGlyphs">Aa</text><path d="M4 33h5" stroke="#5aa0dc" stroke-width="3"/><path d="M11 33h5" stroke="#ec7a3a" stroke-width="3"/><path d="M18 33h5" stroke="#aaa5a5" stroke-width="3"/><path d="M25 33h5" stroke="#f7c52e" stroke-width="3"/><path d="M32 33h5" stroke="#4a72c2" stroke-width="3"/><path d="M39 33h5" stroke="#72b04c" stroke-width="3"/></svg>
          <svg class="ml-[4px] h-[7px] w-[11px] text-[#88828b]"><use href="#chev"/></svg>
        </div>
      </div>

      <div class="flex h-[650px] shrink-0">
        <div class="flex w-[39px] flex-col items-center border-r border-[#e2d9e3] text-[#77717a]">
          <svg class="mt-[23px] size-[15px]"><use href="#search"/></svg>
          <div class="mt-[14px] flex h-[30px] w-full items-center justify-center bg-[#84848f] text-[#ddd8e0]"><svg class="h-[16px] w-[13px]"><use href="#slides"/></svg></div>
          <svg class="mt-[15px] h-[15px] w-[17px]"><use href="#comment"/></svg>
          <svg class="mt-[23px] h-[14px] w-[17px]"><use href="#horn"/></svg>
        </div>
        <div class="flex w-[255px] items-start pt-[11px] pl-[10px]"><span class="mt-[4px] w-[9px] text-[15px] leading-none text-[#77717a] font-['Noto_Sans',sans-serif]">1</span>
          <div class="ml-[4px] flex h-[125px] w-[213px] items-start justify-center border-3 border-[#8b868e] bg-white pt-[45px] text-[13px] leading-none tracking-[-0.2px] text-[#222]">Hello World!</div></div>
        <main class="flex w-[906px] flex-col bg-[#eae6eb]">
          <div class="mt-[55px] ml-[17px] flex h-[481px] w-[856px] flex-col items-center bg-white text-black">
            <h2 class="mt-[186px] text-[53px] leading-[53px]">Hello World!</h2>
            <div class="mt-[13px] flex h-[117px] w-[643px] justify-center border border-dotted border-[#aaa6ab] pt-[4px] text-[21.300px] leading-none text-[#1c1a1d]">Slide subtitle</div>
          </div>
          <div class="mt-auto flex h-[42px] items-center border-t border-[#dcd6dd] pl-[19px] text-[15.700px] text-[#3a373b]">Click to add notes</div>
        </main>
        <div class="flex w-[216px] flex-col border-r border-l border-[#e2d9e3] pt-[8px] pr-[10px] pl-[14px] text-[11px] leading-none text-[#6a646d]">
          <b class="text-[11.500px] tracking-[-0.3px]">Background</b>
          <div class="mt-[2px] flex h-[22px] items-center justify-between border border-[#e3dae4] bg-[#fdf9fd] px-[3px]"><span>Color Fill</span><svg class="mr-[1px] h-[4px] w-[6px]"><use href="#chev"/></svg></div>
          <div class="mt-[9px] flex h-[21px] w-[44px] items-center border border-[#e3dae4] bg-white"><i class="h-full w-[32px] border-r border-[#e3dae4]"></i><svg class="ml-[2px] h-[4px] w-[6px]"><use href="#chev"/></svg></div>
          <b class="mt-[9px] text-[11.500px] tracking-[-0.3px]">Opacity</b>
          <div class="mt-px flex h-[22px] items-center"><span>0</span><i class="ml-[5px] h-[4px] w-[69px] rounded bg-[#d5ced6]"></i><i class="size-[12px] rounded-full border border-[#85808a] bg-white"></i><span class="ml-[2px]">100</span><div class="ml-auto flex h-[22px] w-[61px] items-center border border-[#e3dae4] bg-white pl-[10px]"><span class="tracking-[-0.2px]">100 %</span><span class="ml-[8px] flex flex-col gap-[6px]"><svg class="h-[4px] w-[6px] rotate-180"><use href="#chev"/></svg><svg class="h-[4px] w-[6px]"><use href="#chev"/></svg></span></div></div>
          <div class="mt-[7px] h-px bg-[#d6ced7]"></div>
          <div class="mt-[8px] flex h-[13px] items-center"><i class="size-[13px] border border-[#e6dee7] bg-white"></i><span class="ml-[8px] tracking-[-0.1px]">Show Slide Number</span></div>
          <div class="mt-[9px] flex h-[13px] items-center"><i class="size-[13px] border border-[#e6dee7] bg-white"></i><span class="ml-[8px] tracking-[-0.1px]">Show Date and Time</span></div>
        </div>
        <svg class="h-[650px] w-[39px]" viewBox="1636 367 39 650" fill="none" stroke="#b9b2bc"><rect x="1636" y="382" width="39" height="29" fill="#84848f" stroke="none"/><rect x="1648" y="391" width="14" height="11" stroke="#ddd8e0" stroke-width="1.300"/><rect x="1651" y="393.500" width="8" height="6" fill="#ddd8e0" stroke="none"/><path d="M1652 437h-3v-9.500h9.500v3"/><circle cx="1657.500" cy="435.500" r="5"/><rect x="1648.500" y="465.500" width="14" height="12"/><circle cx="1652" cy="469" r="1.300"/><path d="m1649 475 4-3 3 2 3-4 3 3"/><path d="M1656 502v12M1659 502v12M1653 502.500h7"/><path d="M1656 502c-6 0-6 7 0 7Z" fill="#b9b2bc"/><path d="M1648 541.500h15v11h-15ZM1648 545.500h15M1648 549h15M1653 541.500v11M1658 541.500v11" stroke="#8d8790"/><path d="M1649.500 585.500h3v4h-3ZM1654.500 581.500h3v8h-3ZM1659.500 576.500h3v13h-3ZM1650 613h10M1655 613v10M1650 650v10q1 3 4 1M1648 655h7M1656 664l4-12 3 1-4 9Z"/></svg>
      </div>

      <footer class="flex h-[24px] shrink-0 items-center border-t border-[#e2d9e3] text-[11px] leading-none font-bold text-[#5f5962]">
        <svg class="ml-[11px] h-[13px] w-[14px]"><use href="#play"/></svg><svg class="ml-[5px] h-[4px] w-[7px]"><use href="#chev"/></svg><span class="ml-[9px]">Slide 1 of 1</span>
        <span class="ml-auto tracking-[-0.1px] text-[#bcb5be]">English (United States)</span><svg class="ml-[6px] h-[4px] w-[5px] text-[#bcb5be]"><use href="#chev"/></svg>
        <svg class="ml-[8px] size-[16px]" viewBox="0 0 16 16" fill="none" stroke="currentColor"><circle cx="8" cy="8" r="7" stroke-width="1.500"/><ellipse cx="8" cy="8" rx="3" ry="7"/><path d="M1 5.500h14M1 10.500h14M8 1v14"/></svg>
        <div class="ml-[11px] flex size-[20px] items-center justify-center bg-[#84848f]"><svg class="size-[16px]" viewBox="0 0 16 16"><text x="1" y="7" font-size="7" fill="#eee" textLength="13" lengthAdjust="spacingAndGlyphs">ABC</text><path d="m5 10 3 4 6-8" fill="none" stroke="#eee" stroke-width="1.500"/></svg></div>
        <i class="ml-[9px] h-full w-px bg-[#e2d9e3]"></i>
        <div class="ml-[8px] flex size-[20px] items-center justify-center bg-[#84848f]"><svg class="size-[15px]" viewBox="0 0 15 15" fill="none" stroke="#eee"><path d="M.5.5h14v14H.5ZM3 6V3h3M9 3h3v3M12 9v3H9M6 12H3V9M3 3l9 9M12 3l-9 9"/></svg></div>
        <svg class="ml-[12px] h-[13px] w-[17px]" viewBox="0 0 17 13" fill="none" stroke="currentColor"><path d="M.5 0v13M16.500 0v13M2 6.500h13M5 3.500l-3 3 3 3M12 3.500l3 3-3 3"/></svg>
        <i class="ml-[18px] h-[1.500px] w-[10px] bg-current"></i><span class="ml-[19px] text-[#3f3a42]">Zoom 68%</span>
        <svg class="mr-[44px] ml-[20px] size-[10px]" viewBox="0 0 10 10"><path d="M5 0v10M0 5h10" stroke="currentColor" stroke-width="1.200"/></svg>
      </footer>
    </div>
  </div>

  <!-- Notification captured in the image -->
  <div class="absolute left-[537px] top-[91px] flex h-[67px] w-[490px] items-center rounded-lg bg-white pl-[14px] text-[14px] leading-none shadow-[0_0_4px_rgba(0,0,0,0.35)]">
    <svg class="-mt-[6px] h-[24px] w-[32px]" viewBox="0 0 32 24"><rect width="32" height="24" fill="#fdf6fd"/><path d="M0 1h32" stroke="#8d4e62" stroke-width="2"/><path d="M0 4h4M22 5h8" stroke="#b98" stroke-dasharray="2 1"/><rect x="6" y="7" width="20" height="14" fill="#fff" stroke="#eee"/><path d="M12 12h6" stroke="#222" stroke-width="1.500"/></svg>
    <div class="ml-[11px] flex flex-col gap-[6px] text-[#4a464d]"><span class="tracking-[-0.15px] text-[#77727a]">Screenshot captured</span><span class="tracking-[-0.2px]">You can paste the image from the clipboard.</span></div>
  </div>

  <!-- Viewer overlay controls -->
  <button class="absolute left-[12px] top-[466px] flex h-[39px] w-[44px] items-center justify-center rounded-md bg-[#2a2a2b]/95"><svg class="h-[14px] w-[6px]" viewBox="0 0 6 14"><path d="M5 0 1 7l4 7" fill="none" stroke="#aaa" stroke-width="1.300"/></svg></button>
  <button class="absolute left-[1453px] top-[465px] flex h-[40px] w-[45px] items-center justify-center rounded-md bg-[#5c595e]/95"><svg class="h-[15px] w-[6px]" viewBox="0 0 6 15"><path d="m1 0 4 7.500L1 15" fill="none" stroke="#eee" stroke-width="1.300"/></svg></button>
  <div class="absolute left-[711px] top-[872px] flex h-[40px] w-[88px] items-center justify-center gap-[29px] rounded-md bg-[#676469]">
    <svg class="size-[15px]" viewBox="0 0 15 15" fill="none" stroke="#ddd" stroke-width="1.300"><path d="M3 3a6 6 0 1 1 0 9"/><path d="M0 1v5h5Z" fill="#ddd" stroke="none"/><circle cx="7.500" cy="7.500" r="1.800"/></svg>
    <svg class="size-[15px] -scale-x-100" viewBox="0 0 15 15" fill="none" stroke="#ddd" stroke-width="1.300"><path d="M3 3a6 6 0 1 1 0 9"/><path d="M0 1v5h5Z" fill="#ddd" stroke="none"/><circle cx="7.500" cy="7.500" r="1.800"/></svg>
  </div>
</section>

<!-- Top bar -->
<header class="absolute left-0 top-0 flex h-[31px] w-full items-center bg-[#131213] pb-[3px] text-[18px] leading-none text-[#d6d2d7]">
  <span class="ml-[12px] tracking-[-0.1px]">Activities</span>
  <svg class="ml-[36px] size-[17px]" viewBox="0 0 17 17" fill="none" stroke="currentColor" stroke-width="1.400"><path d="M4 15H3q-2 0-2-2V3q0-2 2-2h11q2 0 2 2v10q0 2-2 2"/><circle cx="9" cy="8.500" r="4"/><path d="m11.500 11.500 4 4M2 15l4-3"/></svg>
  <span class="ml-[5px] tracking-[-0.33px]">Image Viewer</span>
  <span class="ml-[684px] tracking-[-0.13px] whitespace-pre">Apr 20  23:58</span>
  <svg class="mt-[5px] mr-[-5px] ml-auto h-[36px] w-[170px]"><use href="#status"/></svg>
</header>

<!-- Dock -->
<nav class="absolute left-0 top-[31px] flex h-[1049px] w-[64px] flex-col bg-linear-to-b from-[#0c0d0e] via-[#060812] via-30% to-[#0d0d0d] to-65% pl-[5px]">
  <svg class="mt-[13px] size-[48px]"><use href="#chromium"/></svg>
  <svg class="mt-[22px] ml-[2px] h-[45px] w-[43px]"><use href="#firefox"/></svg>
  <svg class="mt-[26px] ml-px h-[41px] w-[45px]"><use href="#files"/></svg>
  <svg class="mt-[29px] ml-[2px] h-[37px] w-[44px]"><use href="#terminal"/></svg>
  <svg class="mt-[25px] ml-px h-[44px] w-[45px]"><use href="#software"/></svg>
  <svg class="mt-[27px] h-[46px] w-[48px]"><use href="#oo"/></svg>
  <div class="mt-[12px] h-px w-[48px] bg-[#3b3a40]"></div>
  <div class="mt-[4px] -ml-[5px] flex h-[64px] w-[61px] shrink-0 items-center rounded-r-xl bg-[#2d2c32] pl-[7px]"><svg class="h-[38px] w-[44px]"><use href="#viewer"/></svg></div>
  <svg class="mt-[14px] ml-[6px] h-[44px] w-[36px]"><use href="#trash"/></svg>
  <svg class="mt-auto mb-[20px] ml-[8px] size-[31px]"><use href="#grid"/></svg>
  <i class="absolute -left-[3px] top-[173px] size-[5px] rounded-full bg-[#1c5bb0]"></i><i class="absolute -left-[3px] top-[310px] size-[5px] rounded-full bg-[#1c5bb0]"></i><i class="absolute -left-[3px] top-[378px] size-[5px] rounded-full bg-[#1c5bb0]"></i><i class="absolute -left-[3px] top-[450px] size-[5px] rounded-full bg-[#1c5bb0]"></i>
</nav>

<!-- Pointer -->
<svg class="absolute left-[935px] top-[64px] h-[19px] w-[12px]" viewBox="0 0 12 19"><path d="M1 1v14l3-3 2.500 6 2.500-1-2.500-5.500H11Z" fill="#222" stroke="#eee"/></svg>
</body>
</html>
